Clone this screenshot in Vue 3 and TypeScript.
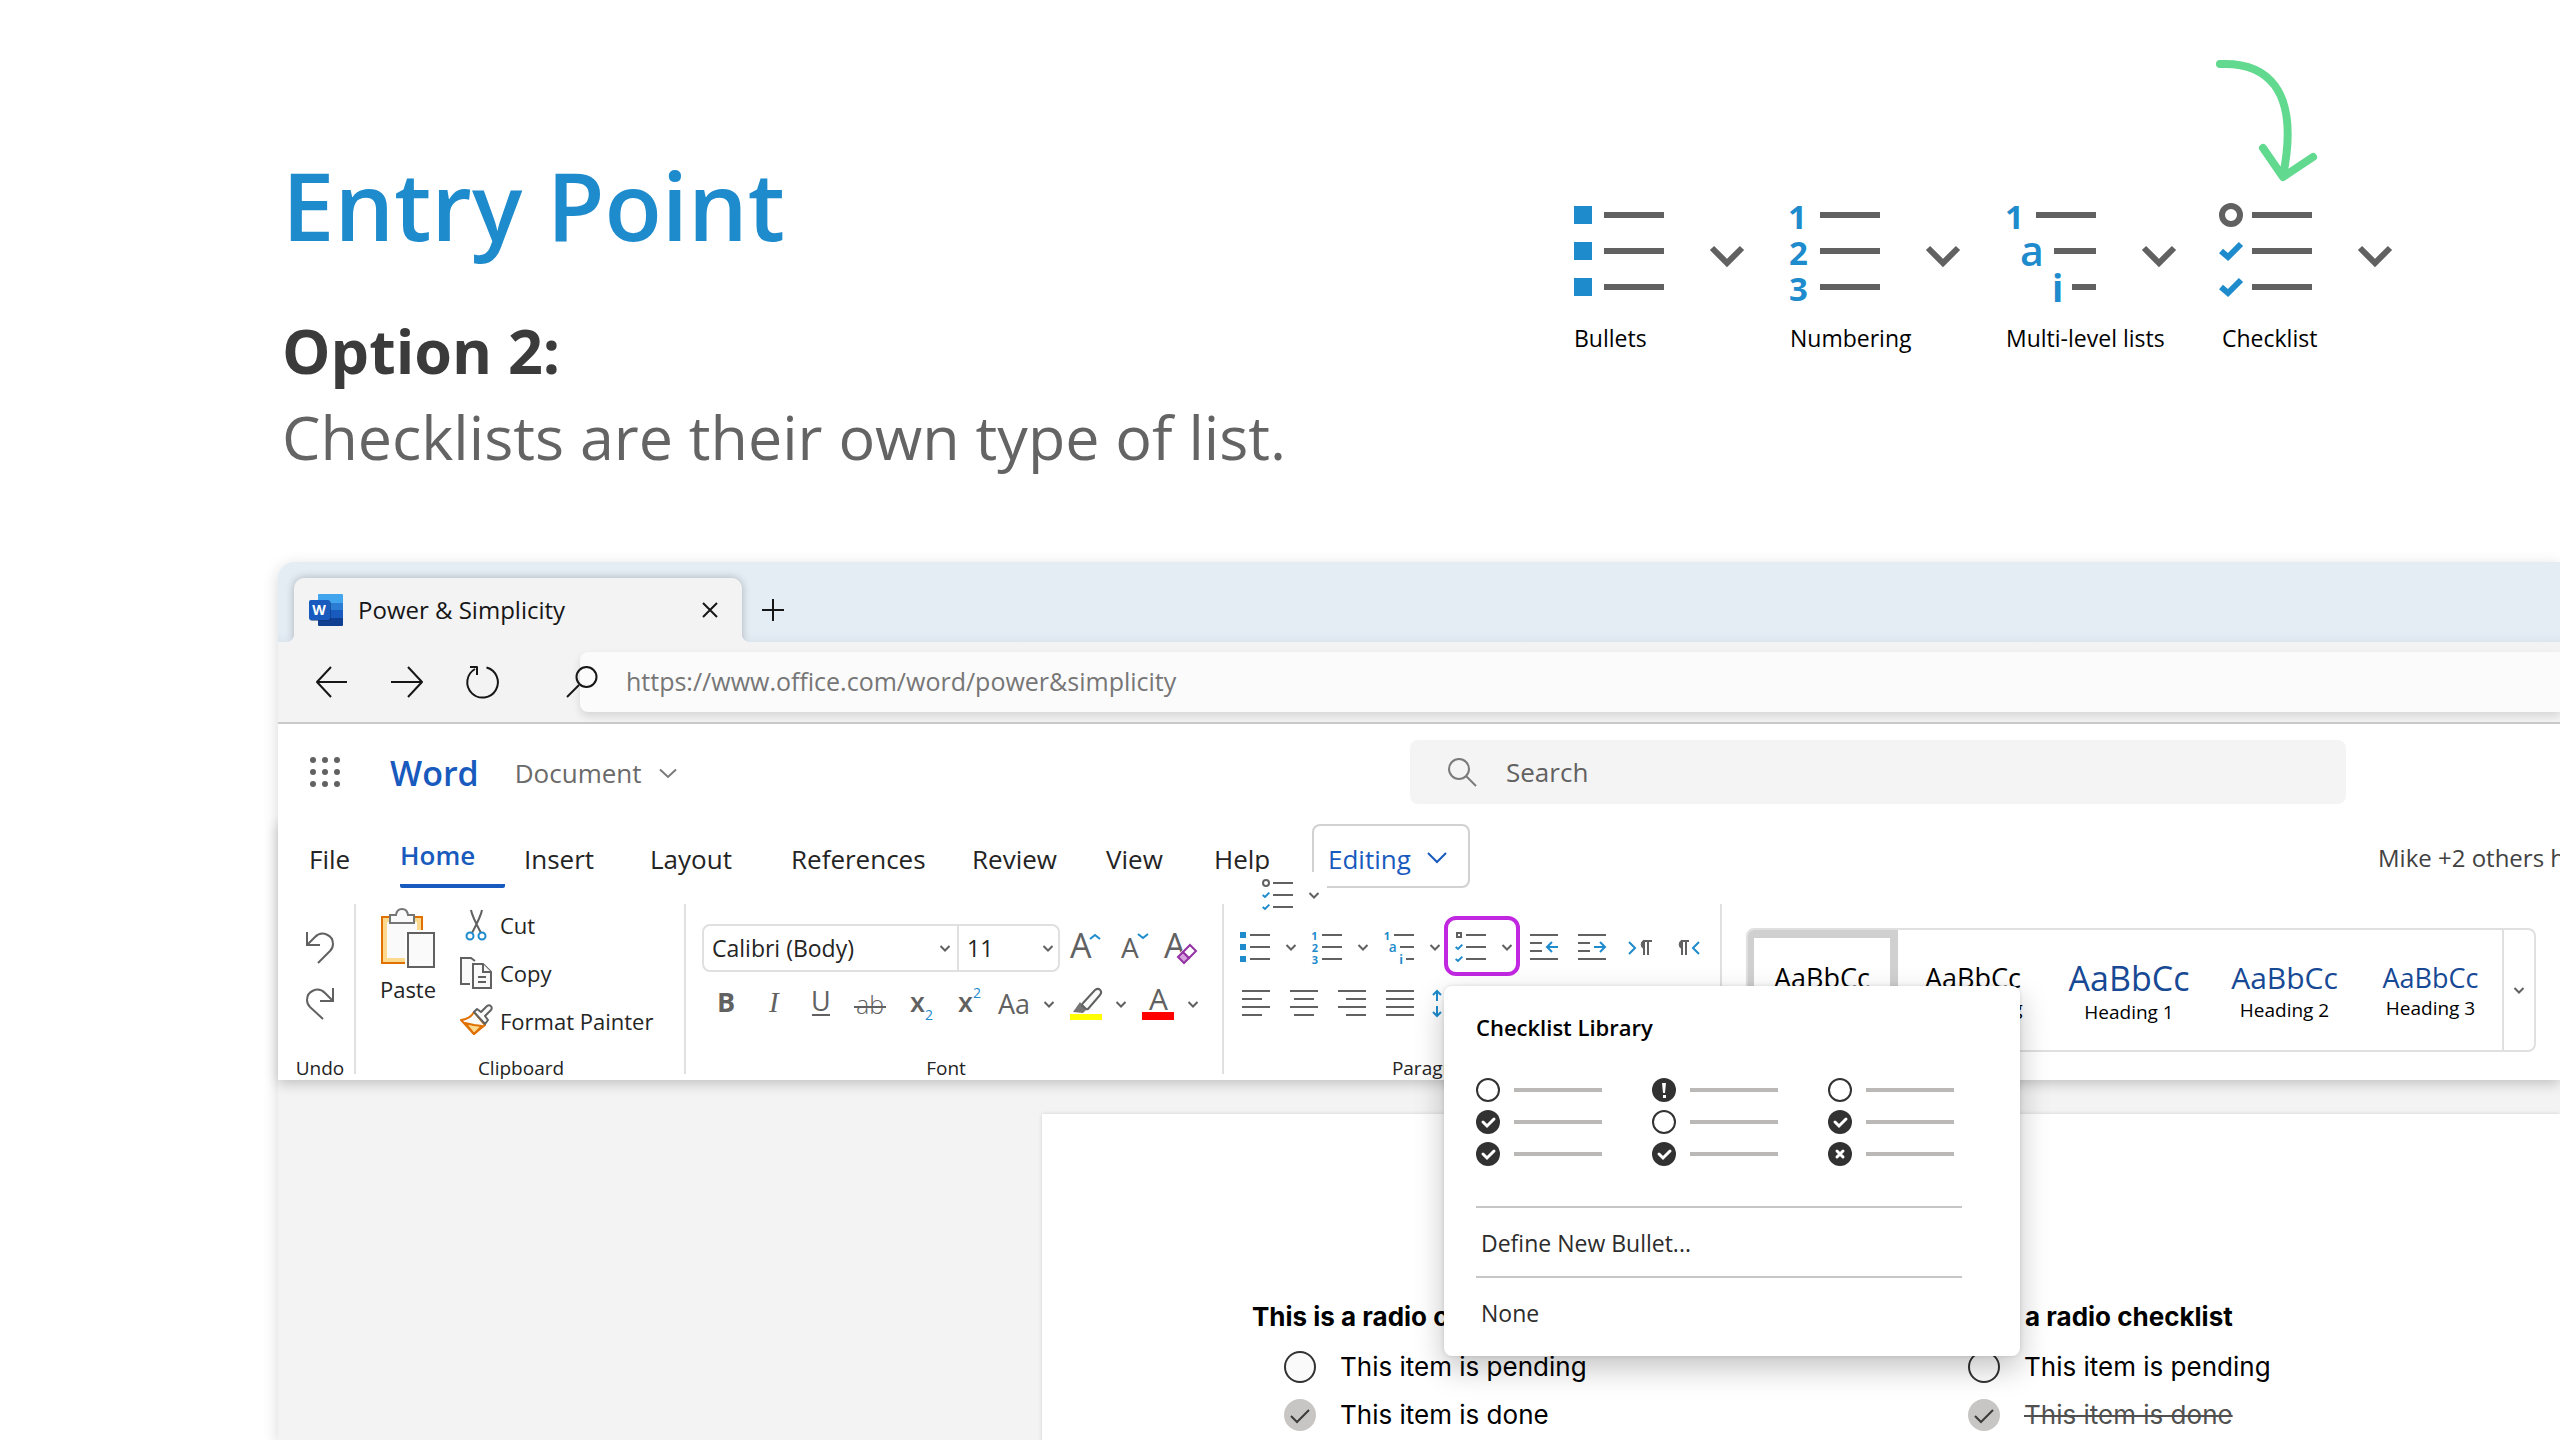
<script setup lang="ts">
import { h } from 'vue'
import type { FunctionalComponent } from 'vue'

interface ListTool { id: string; label: string; pointed?: boolean }
interface StyleItem { label: string; size: string; selected?: boolean }
type Mark = 'open' | 'done' | 'alert' | 'cross'
interface Task { text: string; done: boolean }
interface Numeral { x: number; y: number; size: number; char: string }
interface ListShape { lines: string; numerals?: Numeral[]; squares?: string; ticks?: string; ring?: boolean; box?: string }

const evenLines = 'M30 15h60M30 51h60M30 87h60'
const tickPath = 'M-1 51l7 6 13-13M-1 87l7 6 13-13'
const listShapes: Record<string, ListShape> = {
  bullets: { lines: evenLines, squares: 'M0 6h18v18H0zM0 42h18v18H0zM0 78h18v18H0z' },
  numbers: {
    lines: evenLines,
    numerals: [
      { x: -2, y: 29, size: 33, char: '1' },
      { x: -1, y: 65, size: 33, char: '2' },
      { x: -1, y: 101, size: 33, char: '3' }
    ]
  },
  levels: {
    lines: 'M30 15h60M48 51h42M66 87h24',
    numerals: [
      { x: -1, y: 29, size: 33, char: '1' },
      { x: 14, y: 66, size: 41, char: 'a' },
      { x: 46, y: 102, size: 37, char: 'i' }
    ]
  },
  checks: { lines: evenLines, ticks: tickPath, ring: true },
  boxes: { lines: evenLines, ticks: tickPath, box: 'M3 9h12v12H3z' }
}

// List glyph drawn on a 90 x 102 grid and scaled by its class
const ListIcon: FunctionalComponent<{ kind: string }> = ({ kind }) => {
  const s = listShapes[kind]
  const blue = '#1e8bcd'
  const gray = { fill: 'none', stroke: '#616161', 'stroke-width': 6 }
  return h('svg', { viewBox: '0 0 90 102', 'aria-hidden': 'true' }, [
    s.squares ? h('path', { d: s.squares, fill: blue }) : null,
    s.ring ? h('circle', { cx: 9, cy: 15, r: 9, ...gray }) : null,
    s.box ? h('path', { d: s.box, ...gray }) : null,
    s.ticks ? h('path', { d: s.ticks, fill: 'none', stroke: blue, 'stroke-width': 6 }) : null,
    ...(s.numerals ?? []).map(n =>
      h('text', { x: n.x, y: n.y, fill: blue, 'font-size': n.size, 'font-weight': n.char === 'a' ? 600 : 700 }, n.char)
    ),
    h('path', { d: s.lines, ...gray })
  ])
}
ListIcon.props = ['kind']

const listTools: ListTool[] = [
  { id: 'bullets', label: 'Bullets' },
  { id: 'numbers', label: 'Numbering' },
  { id: 'levels', label: 'Multi-level lists' },
  { id: 'checks', label: 'Checklist', pointed: true }
]
const ribbonLists: ListTool[] = [
  { id: 'bullets', label: 'Bullets' },
  { id: 'numbers', label: 'Numbering' },
  { id: 'levels', label: 'Multi-level lists' },
  { id: 'boxes', label: 'Checklist' }
]
const menus = ['File', 'Home', 'Insert', 'Layout', 'References', 'Review', 'View', 'Help']
const aligns = [
  { label: 'Align left', d: 'M0 2H28M0 10H20M0 18H28M0 26H20' },
  { label: 'Center', d: 'M0 2H28M4 10H24M0 18H28M4 26H24' },
  { label: 'Align right', d: 'M0 2H28M8 10H28M0 18H28M8 26H28' },
  { label: 'Justify', d: 'M0 2H28M0 10H28M0 18H28M0 26H28' }
]
const textStyles: StyleItem[] = [
  { label: 'Normal', size: 'small', selected: true },
  { label: 'No Spacing', size: 'small' },
  { label: 'Heading 1', size: 'large blue' },
  { label: 'Heading 2', size: 'medium blue' },
  { label: 'Heading 3', size: 'small blue' }
]
const library: Mark[][] = [
  ['open', 'done', 'done'],
  ['alert', 'open', 'done'],
  ['open', 'done', 'cross']
]
const tasks: Task[] = [
  { text: 'This item is pending', done: false },
  { text: 'This item is done', done: true }
]
</script>

<template>
  <main class="slide">
    <svg class="defs" width="0" height="0" aria-hidden="true">
      <symbol id="chevron" viewBox="0 0 10 7" overflow="visible">
        <path d="M0.5 1L5 5.500L9.500 1" fill="none" stroke="#616161" stroke-width="2" />
      </symbol>
    </svg>

    <header class="intro">
      <div class="titles">
        <h1>Entry Point</h1>
        <h2>Option 2:</h2>
        <p>Checklists are their own type of list.</p>
      </div>
      <div class="kinds">
        <div v-for="tool in listTools" :key="tool.id" class="kind">
          <button type="button" class="kind-button" :aria-label="tool.label">
            <ListIcon class="kind-icon" :kind="tool.id" />
            <svg class="kind-chevron" viewBox="0 0 34 20"><path d="M2 2l15 15L32 2" /></svg>
          </button>
          <span class="kind-label">{{ tool.label }}</span>
          <svg v-if="tool.pointed" class="pointer" viewBox="0 0 108 126" aria-hidden="true">
            <path d="M6 6C50 4 87 28 69 118M49 90l20 29 30-20" />
          </svg>
        </div>
      </div>
    </header>

    <section class="window">
      <div class="tab-strip">
        <div class="tab">
          <svg class="logo" viewBox="0 0 34 32" aria-hidden="true">
            <path d="M9 1q0-1 1-1h23q1 0 1 1v8H9z" fill="#41a5ee" />
            <path d="M9 9h25v8H9z" fill="#2b7cd3" />
            <path d="M9 16h25v8H9z" fill="#185abd" />
            <path d="M9 24h25v7q0 1-1 1H10q-1 0-1-1z" fill="#103f91" />
            <rect x="1" y="7" width="21" height="20" rx="2" fill="#0b2f6e" opacity="0.5" />
            <rect y="6" width="21" height="20" rx="2" fill="#185abd" />
            <text x="10" y="21" text-anchor="middle" fill="#fff" font-weight="700" font-size="14">W</text>
          </svg>
          <span class="tab-title">Power &amp; Simplicity</span>
          <button type="button" class="tab-close" aria-label="Close tab">
            <svg width="16" height="16" viewBox="0 0 16 16"><path d="M1 1l14 14M15 1L1 15" /></svg>
          </button>
        </div>
        <button type="button" class="tab-new" aria-label="New tab">
          <svg width="22" height="22" viewBox="0 0 22 22"><path d="M11 0v22M0 11h22" /></svg>
        </button>
      </div>

      <div class="toolbar">
        <button type="button" aria-label="Back">
          <svg width="32" height="32" viewBox="0 0 32 32"><path d="M15 1L1 16l14 15M1 16h30" /></svg>
        </button>
        <button type="button" aria-label="Forward">
          <svg width="32" height="32" viewBox="0 0 32 32"><path d="M17 1l14 15-14 15M31 16H0" /></svg>
        </button>
        <button type="button" aria-label="Reload">
          <svg width="32" height="34" viewBox="0 0 32 34"><path d="M20.500 2.500A15.300 15.300 0 1 1 9 4M4 2h7v8" /></svg>
        </button>
        <div class="address">
          <svg class="address-icon" width="32" height="32" viewBox="0 0 32 32"><circle cx="20.500" cy="11" r="10" /><path d="M13 19L1 31" /></svg>
          <input type="text" aria-label="Address" value="https://www.office.com/word/power&amp;simplicity" />
        </div>
      </div>

      <div class="app-header">
        <div class="app-name">
          <button type="button" class="waffle" aria-label="App launcher">
            <i v-for="n in 9" :key="n"></i>
          </button>
          <span class="product">Word</span>
          <button type="button" class="document">
            Document
            <svg width="16" height="9" viewBox="0 0 16 9"><path d="M0 0.500l8 7.500 8-7.500" /></svg>
          </button>
        </div>
        <label class="search">
          <svg width="28" height="28" viewBox="0 0 28 28"><circle cx="11" cy="11" r="10" /><path d="M18 18l10 10" /></svg>
          <input type="search" placeholder="Search" aria-label="Search" />
        </label>
      </div>

      <div class="ribbon">
        <nav class="menu">
          <button v-for="name in menus" :key="name" type="button" :class="{ active: name === 'Home' }">{{ name }}</button>
          <button type="button" class="editing">
            Editing
            <svg width="20" height="12" viewBox="0 0 20 12"><path d="M1 1l9 9 9-9" /></svg>
          </button>
          <span class="people">Mike +2 others here</span>
        </nav>

        <div class="groups">
          <div class="group undo">
            <div class="undo-body">
              <button type="button" aria-label="Undo"><svg width="28" height="32" viewBox="0 0 28 32"><path d="M1 0v13h13M1 13l8-8C16-2 27 3 27 12c0 3-1 5-3 7L12 31" /></svg></button>
              <button type="button" aria-label="Redo"><svg width="28" height="32" viewBox="0 0 28 32"><path d="M27 0v13H14M27 13l-8-8C12-2 1 3 1 12c0 3 1 5 3 7l13 12" /></svg></button>
            </div>
            <span class="group-label">Undo</span>
          </div>

          <div class="group clipboard">
            <div class="clipboard-body">
              <button type="button" class="paste">
                <svg width="54" height="60" viewBox="0 0 54 60">
                  <path d="M1 9h40v46H1z" fill="#fafafa" stroke="#e07000" stroke-width="2" />
                  <path d="M4 12h34v40H4z" fill="none" stroke="#fbd98f" stroke-width="4" />
                  <path d="M24 22h32v38H24z" fill="#fff" />
                  <path d="M9 15V7h6c1-8 11-8 12 0h6v8z" fill="#fafafa" stroke="#757575" stroke-width="2" />
                  <path d="M27 25h26v34H27z" fill="#fafafa" stroke="#616161" stroke-width="2" />
                </svg>
                <span>Paste</span>
              </button>
              <div class="clipboard-list">
                <button type="button">
                  <svg width="32" height="32" viewBox="0 0 32 32">
                    <path d="M11 1q1 6 10 23M22 1q-1 6-10 23" fill="none" stroke="#616161" stroke-width="2" />
                    <circle cx="10" cy="27" r="3.500" fill="none" stroke="#1e8bcd" stroke-width="2" />
                    <circle cx="22" cy="27" r="3.500" fill="none" stroke="#1e8bcd" stroke-width="2" />
                  </svg>
                  Cut
                </button>
                <button type="button">
                  <svg width="32" height="32" viewBox="0 0 32 32" fill="#fafafa" stroke="#616161" stroke-width="2">
                    <path d="M10 27H1V1h10l4 3" />
                    <path d="M13 7h10l8 8v16H13z" />
                    <path d="M23 7v8h8M18 20h8M18 25h8" />
                  </svg>
                  Copy
                </button>
                <button type="button">
                  <svg width="32" height="32" viewBox="0 0 32 32" stroke-width="2" stroke-linejoin="round">
                    <path d="M14 7Q10 14 1 15L14 29l11-9z" fill="#fafafa" stroke="#e07000" />
                    <path d="M5 18l9 11 8-8-8-1z" fill="#fbd98f" stroke="#e07000" />
                    <path d="M14 7l3-3 4 3 6-6c3-2 6 1 4 4l-6 6 3 4-3 4z" fill="#fafafa" stroke="#616161" />
                  </svg>
                  Format Painter
                </button>
              </div>
            </div>
            <span class="group-label">Clipboard</span>
          </div>

          <div class="group font">
            <div class="font-row first">
              <div class="combo">
                <span class="pick family">
                  <select aria-label="Font family"><option>Calibri (Body)</option></select>
                  <svg class="caret"><use href="#chevron" /></svg>
                </span>
                <span class="pick size">
                  <select aria-label="Font size"><option>11</option></select>
                  <svg class="caret"><use href="#chevron" /></svg>
                </span>
              </div>
              <button type="button" aria-label="Grow font">
                <svg class="glyph" viewBox="0 0 32 32"><text x="0" y="26" font-size="34">A</text><path d="M20 7l5-4 5 4" stroke="#1e8bcd" /></svg>
              </button>
              <button type="button" aria-label="Shrink font">
                <svg class="glyph" viewBox="0 0 32 32"><text x="3" y="26" font-size="28">A</text><path d="M20 2l5 4 5-4" stroke="#1e8bcd" /></svg>
              </button>
              <button type="button" aria-label="Clear formatting">
                <svg class="glyph" viewBox="0 0 32 32">
                  <text x="-2" y="26" font-size="34">A</text>
                  <path d="M11 24L23 11l9 8-12 13z" fill="#fff" stroke="none" />
                  <path d="M12 25l5-5 6 6-5 5z" fill="#d9a0e0" stroke="#9332a3" />
                  <path d="M17 20l7-7 6 6-7 7z" fill="#fff" stroke="#9332a3" />
                </svg>
              </button>
            </div>
            <div class="font-row second">
              <button type="button" aria-label="Bold"><svg class="glyph" viewBox="0 0 32 32"><text x="7" y="24" font-size="27" font-weight="700">B</text></svg></button>
              <button type="button" aria-label="Italic"><svg class="glyph" viewBox="0 0 32 32"><text x="11" y="24" font-size="29" font-style="italic" font-family="Liberation Serif, serif">I</text></svg></button>
              <button type="button" aria-label="Underline"><svg class="glyph" viewBox="0 0 32 32"><text x="5" y="23" font-size="27">U</text><path d="M6 27h18" /></svg></button>
              <button type="button" aria-label="Strikethrough"><svg class="glyph" viewBox="0 0 32 32"><text x="2" y="26" font-size="25" font-weight="300">ab</text><path d="M0 19h32" /></svg></button>
              <button type="button" aria-label="Subscript"><svg class="glyph" viewBox="0 0 32 32"><text x="8" y="24" font-size="27" font-weight="600">x</text><text class="tint" x="23" y="32" font-size="14">2</text></svg></button>
              <button type="button" aria-label="Superscript"><svg class="glyph" viewBox="0 0 32 32"><text x="8" y="24" font-size="27" font-weight="600">x</text><text class="tint" x="23" y="10" font-size="14">2</text></svg></button>
              <div class="split">
                <button type="button" aria-label="Change case"><svg class="glyph" viewBox="0 0 32 32"><text x="0" y="26" font-size="27">Aa</text></svg></button>
                <button type="button" class="more" aria-label="Change case options"><svg class="caret"><use href="#chevron" /></svg></button>
              </div>
              <div class="split">
                <button type="button" aria-label="Highlight">
                  <svg class="glyph" viewBox="0 0 32 32">
                    <path d="M0 26h32v6H0z" fill="#ffff00" stroke="none" />
                    <path d="M3 24l7-10 6 8-3 3z" fill="#757575" stroke="none" />
                    <path d="M13 15L25 2c4-3 8 1 5 5L18 21q-1 1-3-1l-3-3q0-1 1-2z" fill="#fafafa" />
                  </svg>
                </button>
                <button type="button" class="more" aria-label="Highlight colors"><svg class="caret"><use href="#chevron" /></svg></button>
              </div>
              <div class="split">
                <button type="button" aria-label="Font color">
                  <svg class="glyph" viewBox="0 0 32 32"><path d="M0 24h32v8H0z" fill="#ff0000" stroke="none" /><text x="7" y="22" font-size="30">A</text></svg>
                </button>
                <button type="button" class="more" aria-label="Font colors"><svg class="caret"><use href="#chevron" /></svg></button>
              </div>
            </div>
            <span class="group-label">Font</span>
          </div>

          <div class="group paragraph">
            <div class="floating">
              <ListIcon class="small-list" kind="checks" />
              <svg class="caret"><use href="#chevron" /></svg>
            </div>
            <div class="para-row first">
              <div v-for="tool in ribbonLists" :key="tool.id" class="split" :class="{ picked: tool.id === 'boxes' }">
                <button type="button" :aria-label="tool.label"><ListIcon class="small-list" :kind="tool.id" /></button>
                <button type="button" class="more" :aria-label="tool.label + ' options'"><svg class="caret"><use href="#chevron" /></svg></button>
              </div>
              <div class="para-tools">
                <button type="button" aria-label="Decrease indent">
                  <svg width="28" height="28" viewBox="0 0 28 28"><path d="M0 2h28M0 10h12M0 18h12M0 26h28" /><path class="tint" d="M28 14H17M22 9l-5 5 5 5" /></svg>
                </button>
                <button type="button" aria-label="Increase indent">
                  <svg width="28" height="28" viewBox="0 0 28 28"><path d="M0 2h28M0 10h12M0 18h12M0 26h28" /><path class="tint" d="M16 14h11M22 9l5 5-5 5" /></svg>
                </button>
                <button type="button" aria-label="Left-to-right">
                  <svg width="28" height="28" viewBox="0 0 28 28"><path class="tint" d="M3 9l6 6-6 6" /><path d="M18 22V8h8M22 8v14" /><path d="M18 7a5 5 0 0 0 0 9z" fill="#616161" stroke="#616161" stroke-width="1" /></svg>
                </button>
                <button type="button" aria-label="Right-to-left">
                  <svg width="28" height="28" viewBox="0 0 28 28"><path class="tint" d="M25 9l-6 6 6 6" /><path d="M8 22V8h7M12 8v14" /><path d="M8 7a5 5 0 0 0 0 9z" fill="#616161" stroke="#616161" stroke-width="1" /></svg>
                </button>
              </div>
            </div>
            <div class="para-row second">
              <button v-for="a in aligns" :key="a.label" type="button" :aria-label="a.label">
                <svg width="28" height="28" viewBox="0 0 28 28"><path :d="a.d" /></svg>
              </button>
              <button type="button" aria-label="Line spacing">
                <svg width="28" height="28" viewBox="0 0 28 28"><path class="tint" d="M3 2v10M-1 6l4-4 4 4M3 17v10M-1 23l4 4 4-4" /></svg>
              </button>
            </div>
            <span class="group-label">Paragraph</span>

            <div class="library" role="menu" aria-label="Checklist Library">
              <h3>Checklist Library</h3>
              <div class="library-grid">
                <button v-for="(marks, i) in library" :key="i" type="button" class="sample" :aria-label="'Checklist style ' + (i + 1)">
                  <svg v-for="(mark, j) in marks" :key="j" width="126" height="24" viewBox="0 0 126 24">
                    <circle v-if="mark === 'open'" cx="12" cy="12" r="11" fill="#fff" stroke="#323232" stroke-width="2" />
                    <circle v-else cx="12" cy="12" r="12" fill="#323232" />
                    <path v-if="mark === 'done'" d="M7 12l4 4 7-7" fill="none" stroke="#fff" stroke-width="3" stroke-linecap="round" />
                    <path v-if="mark === 'cross'" d="M9 9l6 6M15 9l-6 6" fill="none" stroke="#fff" stroke-width="3" stroke-linecap="round" />
                    <path v-if="mark === 'alert'" d="M10 5h4l-1 10h-2zM11 17h3v3h-3z" fill="#fff" />
                    <path d="M38 12h88" stroke="#bbb9b7" stroke-width="4" />
                  </svg>
                </button>
              </div>
              <button type="button" class="library-item">Define New Bullet...</button>
              <button type="button" class="library-item">None</button>
            </div>
          </div>

          <div class="gallery">
            <button v-for="s in textStyles" :key="s.label" type="button" class="style-item" :class="[s.size, { selected: s.selected }]">
              <span class="preview">AaBbCc</span>
              <span class="style-name">{{ s.label }}</span>
            </button>
            <button type="button" class="gallery-more" aria-label="More styles"><svg class="caret"><use href="#chevron" /></svg></button>
          </div>
        </div>
      </div>

      <div class="canvas">
        <article class="paper">
          <section v-for="col in 2" :key="col" class="tasks" :class="{ struck: col === 2 }">
            <h4>This is a radio checklist</h4>
            <label v-for="task in tasks" :key="task.text" class="task" :class="{ done: task.done }">
              <span class="tick">
                <input type="checkbox" :checked="task.done" />
                <svg v-if="task.done" viewBox="0 0 32 32"><path d="M7 17l6 6 12-12" /></svg>
              </span>
              <span class="task-text">{{ task.text }}</span>
            </label>
          </section>
        </article>
      </div>
    </section>
  </main>
</template>

<style>
html, body { height: 100%; }
body { margin: 0; background: #fff; }
</style>

<style scoped>
.slide, .slide *, .slide *::before, .slide *::after { box-sizing: border-box; }
.slide {
  display: flex;
  flex-direction: column;
  height: 100vh;
  overflow: hidden;
  background: #fff;
  font-family: "Open Sans", "Noto Sans", sans-serif;
  color: #242424;
}
.defs { position: absolute; }
svg { display: block; overflow: visible; flex: none; }
button {
  margin: 0;
  padding: 0;
  border: 0;
  background: none;
  font: inherit;
  color: inherit;
  text-align: left;
  white-space: nowrap;
}
input, select { font: inherit; color: inherit; outline: 0; border: 0; background: none; padding: 0; margin: 0; }

/* Slide heading */
.intro { display: flex; justify-content: space-between; padding: 145px 122px 82px 282px; }
h1, h2, h3, h4, .titles p { margin: 0; }
h1 { margin-bottom: 43px; font-size: 94px; line-height: 120px; font-weight: 600; color: #1e8bcd; }
h2 { font-size: 61px; line-height: 86px; font-weight: 700; color: #3b3b3b; }
.titles p { font-size: 61px; line-height: 86px; color: #646464; white-space: nowrap; }
.kinds { display: flex; padding-top: 55px; }
.kind { position: relative; width: 216px; }
.kind-button { display: flex; align-items: center; gap: 46px; }
.kind-icon { width: 90px; height: 102px; }
.kind-chevron { width: 34px; height: 20px; margin-top: 10px; fill: none; stroke: #616161; stroke-width: 6px; }
.kind-label { display: block; margin-top: 20px; font-size: 23px; line-height: 32px; color: #000; white-space: nowrap; }
.pointer {
  position: absolute;
  left: -8px;
  top: -142px;
  width: 108px;
  height: 126px;
  fill: none;
  stroke: #61d98f;
  stroke-width: 8px;
  stroke-linecap: round;
  stroke-linejoin: round;
}

/* Browser window */
.window {
  flex: 1;
  display: flex;
  flex-direction: column;
  min-height: 0;
  margin-left: 278px;
  border-radius: 16px 0 0 0;
  box-shadow: 0 4px 16px rgba(0, 0, 0, 0.16);
  background: #fff;
}
.tab-strip {
  display: flex;
  align-items: center;
  gap: 20px;
  padding: 16px 0 0 16px;
  border-radius: 16px 0 0 0;
  background: linear-gradient(#e4ecf4 88%, #dde5ee);
}
.tab {
  position: relative;
  display: flex;
  align-items: center;
  width: 448px;
  height: 64px;
  padding: 0 24px 0 15px;
  border-radius: 10px 10px 0 0;
  background: #f3f3f3;
  box-shadow: 0 0 8px rgba(0, 0, 0, 0.25);
}
.tab::before, .tab::after { content: ""; position: absolute; bottom: 0; width: 8px; height: 8px; }
.tab::before { left: -8px; background: radial-gradient(circle at 0 0, transparent 8px, #f3f3f3 8px); }
.tab::after { right: -8px; background: radial-gradient(circle at 100% 0, transparent 8px, #f3f3f3 8px); }
.logo { width: 34px; height: 32px; }
.tab-title { flex: 1; margin-left: 15px; padding-bottom: 2px; font-size: 24px; color: #161616; }
.tab-close svg, .tab-new svg { fill: none; stroke: #161616; stroke-width: 2px; }
.toolbar {
  position: relative;
  display: flex;
  align-items: center;
  gap: 43px;
  height: 82px;
  padding-left: 38px;
  border-bottom: 2px solid #cacaca;
  background: #f3f3f3;
}
.toolbar svg { fill: none; stroke: #161616; stroke-width: 2px; stroke-linejoin: round; }
.address {
  position: relative;
  flex: 1;
  margin-left: 39px;
  border-radius: 8px 0 0 8px;
  background: #fbfbfb;
  box-shadow: 0 4px 8px rgba(0, 0, 0, 0.12);
}
.address-icon { position: absolute; left: -14px; top: 14px; }
.address input { display: block; width: 100%; height: 60px; padding: 0 0 2px 46px; font-size: 25px; color: #767676; }

/* Word header */
.app-header { position: relative; z-index: 2; display: flex; align-items: center; height: 96px; background: #fff; }
.app-name { display: flex; align-items: center; width: 1132px; padding-left: 32px; }
.waffle { display: grid; grid-template-columns: repeat(3, 6px); gap: 6px; width: 30px; }
.waffle i { width: 6px; height: 6px; border-radius: 50%; background: #616161; }
.product { margin-left: 50px; padding-top: 2px; font-size: 34px; line-height: 48px; font-weight: 600; color: #185abd; }
.document { display: flex; align-items: center; gap: 18px; margin-left: 36px; padding-top: 2px; font-size: 26px; line-height: 40px; color: #6a6a6a; }
.document svg { fill: none; stroke: #7a7a7a; stroke-width: 2px; }
.search { display: flex; align-items: center; gap: 30px; width: 41%; height: 64px; padding-left: 38px; border-radius: 8px; background: #f4f4f4; }
.search svg { fill: none; stroke: #7a7a7a; stroke-width: 2px; }
.search input { flex: 1; font-size: 26px; color: #616161; }
.search input::placeholder { color: #616161; opacity: 1; }

/* Ribbon */
.ribbon { position: relative; z-index: 1; padding-top: 4px; background: #fff; box-shadow: 0 4px 12px rgba(0, 0, 0, 0.2); }
.menu {
  display: grid;
  grid-template-columns: 91px 124px 126px 141px 181px 134px 108px 98px 158px 1fr;
  height: 64px;
  padding-left: 31px;
  font-size: 26px;
  line-height: 36px;
}
.menu button { padding-top: 17px; align-self: stretch; display: flex; align-items: flex-start; }
.menu .active { width: 105px; padding-top: 13px; border-bottom: 4px solid #185abd; border-radius: 2px; font-weight: 600; color: #185abd; }
.menu .editing { gap: 16px; padding: 15px 0 0 14px; border: 2px solid #d1d1d1; border-radius: 8px; color: #185abd; }
.editing svg { margin-top: 11px; fill: none; stroke: #185abd; stroke-width: 2px; }
.people { width: 180px; margin-left: 908px; padding-top: 16px; font-size: 24px; line-height: 36px; color: #424242; white-space: nowrap; }
.groups { display: flex; height: 192px; }
.group { position: relative; display: flex; flex-direction: column; flex: none; }
.group::after { content: ""; position: absolute; right: 0; top: 16px; width: 2px; height: 170px; background: #e0e0e0; }
.group-label { margin-top: auto; font-size: 19px; line-height: 24px; text-align: center; }
.undo { width: 78px; padding-left: 6px; }
.undo-body { display: flex; flex-direction: column; align-items: center; gap: 24px; padding-top: 44px; }
.undo-body svg { fill: none; stroke: #616161; stroke-width: 2px; }
.clipboard { width: 330px; }
.clipboard-body { display: flex; font-size: 22px; }
.paste { display: flex; flex-direction: column; align-items: center; width: 68px; margin: 20px 0 0 18px; line-height: 30px; }
.paste span { margin-top: 6px; }
.clipboard-list { padding: 13px 0 0 18px; line-height: 48px; }
.clipboard-list button { display: flex; align-items: center; gap: 8px; }
.font { width: 538px; }
.font .group-label { margin-right: 18px; }
.font-row { display: flex; align-items: center; gap: 16px; }
.font-row.first { padding: 36px 0 0 16px; }
.font-row.second { padding: 16px 0 0 24px; }
.combo { display: flex; width: 358px; height: 48px; margin-right: -6px; border: 2px solid #e0e0e0; border-radius: 8px; font-size: 23px; }
.pick { position: relative; flex: 1; }
.pick.family { flex: none; width: 255px; border-right: 2px solid #e0e0e0; }
.pick select { appearance: none; width: 100%; height: 44px; padding-left: 8px; }
.pick .caret { position: absolute; right: 7px; top: 19px; }
.pick.size .caret { right: 5px; }
.caret { width: 10px; height: 7px; }
.glyph { width: 32px; height: 32px; fill: none; stroke: #616161; stroke-width: 2px; }
.glyph text { fill: #616161; stroke: none; }
.glyph text.tint { fill: #1e8bcd; }
.split { position: relative; display: flex; align-items: center; gap: 14px; }
.paragraph { width: 498px; }
.paragraph > .group-label { margin-right: 70px; }
.para-row { display: flex; align-items: center; }
.para-row.first { gap: 16px; padding: 42px 0 0 16px; }
.para-row.first .split { gap: 16px; }
.para-row.second { gap: 20px; padding: 25px 0 0 18px; }
.para-tools { display: flex; gap: 20px; margin-left: 2px; }
.para-tools svg, .para-row.second svg { fill: none; stroke: #616161; stroke-width: 2px; }
.paragraph svg .tint { stroke: #1e8bcd; stroke-width: 2px; }
.small-list { width: 30px; height: 34px; }
.picked::before {
  content: "";
  position: absolute;
  left: -12px;
  right: -8px;
  top: -14px;
  height: 60px;
  border: 4px solid #c127e0;
  border-radius: 12px;
}
.floating {
  position: absolute;
  left: 31px;
  top: -16px;
  display: flex;
  align-items: center;
  gap: 16px;
  height: 46px;
  padding: 0 8px;
  background: #fff;
}

/* Checklist library menu */
.library {
  position: absolute;
  z-index: 3;
  left: 220px;
  top: 98px;
  width: 576px;
  padding: 25px 58px 10px 32px;
  border-radius: 8px;
  background: #fff;
  box-shadow: 0 12px 30px rgba(0, 0, 0, 0.24), 0 0 4px rgba(0, 0, 0, 0.12);
}
h3 { font-size: 22px; line-height: 32px; font-weight: 600; color: #000; }
.library-grid { display: flex; gap: 50px; padding: 35px 0 40px; }
.sample { display: flex; flex-direction: column; gap: 8px; }
.library-item { display: block; width: 100%; height: 70px; padding: 2px 0 0 5px; border-top: 2px solid #c6c6c6; font-size: 23px; color: #2c2c2c; }

/* Styles gallery */
.gallery {
  display: grid;
  grid-template-columns: 150px 150px 162px 149px 143px 32px;
  height: 124px;
  margin: 40px 0 0 24px;
  border: 2px solid #e0e0e0;
  border-radius: 8px;
  color: #000;
}
.style-item { display: flex; flex-direction: column; align-items: center; justify-content: center; padding-top: 2px; }
.style-item.selected { border: 8px solid #d0d0d0; border-left-width: 6px; border-radius: 6px 0 0 6px; }
.style-item.small .preview { font-size: 27px; line-height: 34px; }
.style-item.medium .preview { font-size: 30px; line-height: 38px; }
.style-item.large .preview { font-size: 34px; line-height: 42px; }
.style-item.blue .preview { color: #174994; }
.style-name { font-size: 19px; line-height: 26px; }
.gallery-more { display: flex; align-items: center; justify-content: center; border-left: 2px solid #e0e0e0; }

/* Document */
.canvas { flex: 1; min-height: 0; padding: 34px 0 0 764px; overflow: hidden; background: #f3f3f3; }
.paper {
  display: grid;
  grid-template-columns: 684px 1fr;
  align-content: start;
  height: 100%;
  min-height: 480px;
  padding: 179px 0 0 210px;
  background: #fff;
  box-shadow: 0 0 4px rgba(0, 0, 0, 0.14);
  font-family: Inter, sans-serif;
  font-size: 26px;
  line-height: 48px;
  color: #000;
}
h4 { margin-bottom: 2px; font-size: 26px; font-weight: 700; }
.task { display: flex; align-items: center; gap: 24px; padding-left: 32px; }
.tick { position: relative; width: 32px; height: 32px; }
.tick input { display: block; appearance: none; width: 32px; height: 32px; border: 2px solid #323232; border-radius: 50%; background: #fafafa; }
.struck .tick input { background: none; }
.tick input:checked { border-color: #c8c6c4; background: #c8c6c4; }
.tick svg { position: absolute; inset: 0; fill: none; stroke: #3b3b3b; stroke-width: 2px; }
.struck .done .task-text { color: #505050; text-decoration: line-through; text-decoration-thickness: 2px; }
</style>
